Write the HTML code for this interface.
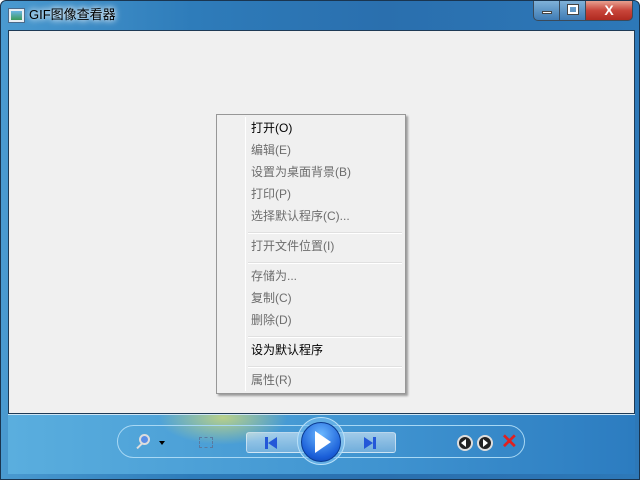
<!DOCTYPE html>
<html><head><meta charset="utf-8"><style>
*{margin:0;padding:0;box-sizing:border-box}
body{width:640px;height:480px;overflow:hidden;background:#fff;font-family:"Liberation Sans","Noto Sans CJK SC",sans-serif;position:relative}
.win{position:absolute;left:0;top:0;width:640px;height:480px;border:1px solid #1a3550;border-radius:6px 6px 0 0;
background:linear-gradient(90deg,#4a9ad0 0%,#2e7cba 30%,#2a6fae 60%,#2d78b8 100%);overflow:hidden}
.title{position:absolute;left:6px;top:0;height:28px;font-size:13px;color:#000;line-height:28px;padding-left:22px;text-shadow:0 0 8px #fff,0 0 6px #fff}
.ico{position:absolute;left:8px;top:8px;width:15px;height:13px;background:linear-gradient(#6ab4e4,#3c9a5a);border:2px solid #e8eef4;box-shadow:0 0 0 1px #4a6a8a}
.client{position:absolute;left:7px;top:29px;width:627px;height:384px;background:#f0f0f0;border:1px solid #1e3a55}
.bottom{position:absolute;left:7px;top:413px;width:627px;height:60px;background:linear-gradient(90deg,#5aaede,#3f93d0 60%,#2c7cc0);border-top:1px solid #cfe6f5;overflow:hidden}
.btn{position:absolute;top:0;height:20px;border:1px solid #3a4a5a;border-top:none}
.menu{position:absolute;left:216px;top:114px;width:190px;height:280px;background:#f0f0f0;border:1px solid #979797;box-shadow:2px 2px 2px rgba(0,0,0,.35)}
.gut{position:absolute;left:28px;top:2px;bottom:2px;width:1px;background:#e0e0e0;border-right:1px solid #fff}
.it{position:absolute;left:34px;font-size:12px;color:#6d6d6d;height:20px;line-height:20px}
.b{color:#000}
.sep{position:absolute;left:31px;right:3px;height:2px;border-top:1px solid #e0e0e0;border-bottom:1px solid #fff}
.pill{position:absolute;left:116px;top:424px;width:408px;height:33px;border:1.5px solid #a8d8f4;border-radius:17px}
</style></head><body>
<div class="win">
<div class="ico"></div>
<div class="title">GIF图像查看器</div>
<div class="btn" style="left:532px;width:27px;border-radius:0 0 0 5px;background:linear-gradient(#7fb1d8,#3f7cb5)"><div style="position:absolute;left:8px;top:10px;width:10px;height:3px;background:#fff;border:1px solid #444"></div></div>
<div class="btn" style="left:558px;width:27px;background:linear-gradient(#7fb1d8,#3f7cb5)"><div style="position:absolute;left:8px;top:4px;width:10px;height:9px;border:2px solid #fff;outline:1px solid #444"></div></div>
<div class="btn" style="left:584px;width:48px;border-radius:0 0 5px 0;background:linear-gradient(#e8a090,#c8453a 50%,#b02a20);color:#fff;font-weight:bold;font-size:14px;text-align:center;line-height:18px">X</div>
<div class="client"></div>
<div class="bottom">
<div style="position:absolute;left:150px;top:-25px;width:130px;height:55px;border-radius:50%;background:radial-gradient(#b8d08a,rgba(160,200,120,0) 70%)"></div>
</div>
<div class="pill"></div>
<div style="position:absolute;left:138px;top:433px;width:11px;height:11px;border-radius:50%;border:2px solid #ddd;background:#5b8fe8"></div>
<div style="position:absolute;left:135px;top:444px;width:7px;height:2px;background:#ddd;transform:rotate(-45deg)"></div>
<div style="position:absolute;left:158px;top:440px;border:3px solid transparent;border-top:4px solid #000"></div>
<div style="position:absolute;left:198px;top:436px;width:14px;height:11px;border:1px dashed #5a7aa0"></div>
<div style="position:absolute;left:245px;top:431px;width:150px;height:21px;border-radius:3px;background:linear-gradient(rgba(255,255,255,.5),rgba(200,220,240,.35));border:1px solid rgba(255,255,255,.5)"></div>
<div style="position:absolute;left:264px;top:436px;width:3px;height:12px;background:#2458d8"></div>
<div style="position:absolute;left:267px;top:436px;border:6px solid transparent;border-right:9px solid #2458d8;border-left:0"></div>
<div style="position:absolute;left:363px;top:436px;border:6px solid transparent;border-left:9px solid #2458d8;border-right:0"></div>
<div style="position:absolute;left:372px;top:436px;width:3px;height:12px;background:#2458d8"></div>
<div style="position:absolute;left:296px;top:416px;width:48px;height:48px;border-radius:50%;background:rgba(120,190,240,.6);border:1px solid #b8e0f8"></div>
<div style="position:absolute;left:300px;top:421px;width:40px;height:40px;border-radius:50%;background:radial-gradient(circle at 50% 30%,#6ab8ff,#1a5ed8 70%,#0c3ea8);border:1px solid #0a3a90"></div>
<div style="position:absolute;left:314px;top:430px;border:11px solid transparent;border-left:16px solid #fff;border-right:0"></div>
<div style="position:absolute;left:456px;top:434px;width:16px;height:16px;border-radius:50%;background:#222;border:2px solid #ddd"></div>
<div style="position:absolute;left:460px;top:438px;border:4px solid transparent;border-right:5px solid #fff;border-left:0"></div>
<div style="position:absolute;left:476px;top:434px;width:16px;height:16px;border-radius:50%;background:#222;border:2px solid #ddd"></div>
<div style="position:absolute;left:482px;top:438px;border:4px solid transparent;border-left:5px solid #fff;border-right:0"></div>
<div style="position:absolute;left:500px;top:431px;font-size:20px;color:#e02020;font-weight:bold;line-height:20px">✕</div>
</div>
<div class="menu">
<div class="gut"></div>
<div class="it b" style="top:3px">打开(O)</div>
<div class="it" style="top:25px">编辑(E)</div>
<div class="it" style="top:47px">设置为桌面背景(B)</div>
<div class="it" style="top:69px">打印(P)</div>
<div class="it" style="top:91px">选择默认程序(C)...</div>
<div class="sep" style="top:117px"></div>
<div class="it" style="top:121px">打开文件位置(I)</div>
<div class="sep" style="top:147px"></div>
<div class="it" style="top:151px">存储为...</div>
<div class="it" style="top:173px">复制(C)</div>
<div class="it" style="top:195px">删除(D)</div>
<div class="sep" style="top:221px"></div>
<div class="it b" style="top:225px">设为默认程序</div>
<div class="sep" style="top:251px"></div>
<div class="it" style="top:255px">属性(R)</div>
</div>
</body></html>
